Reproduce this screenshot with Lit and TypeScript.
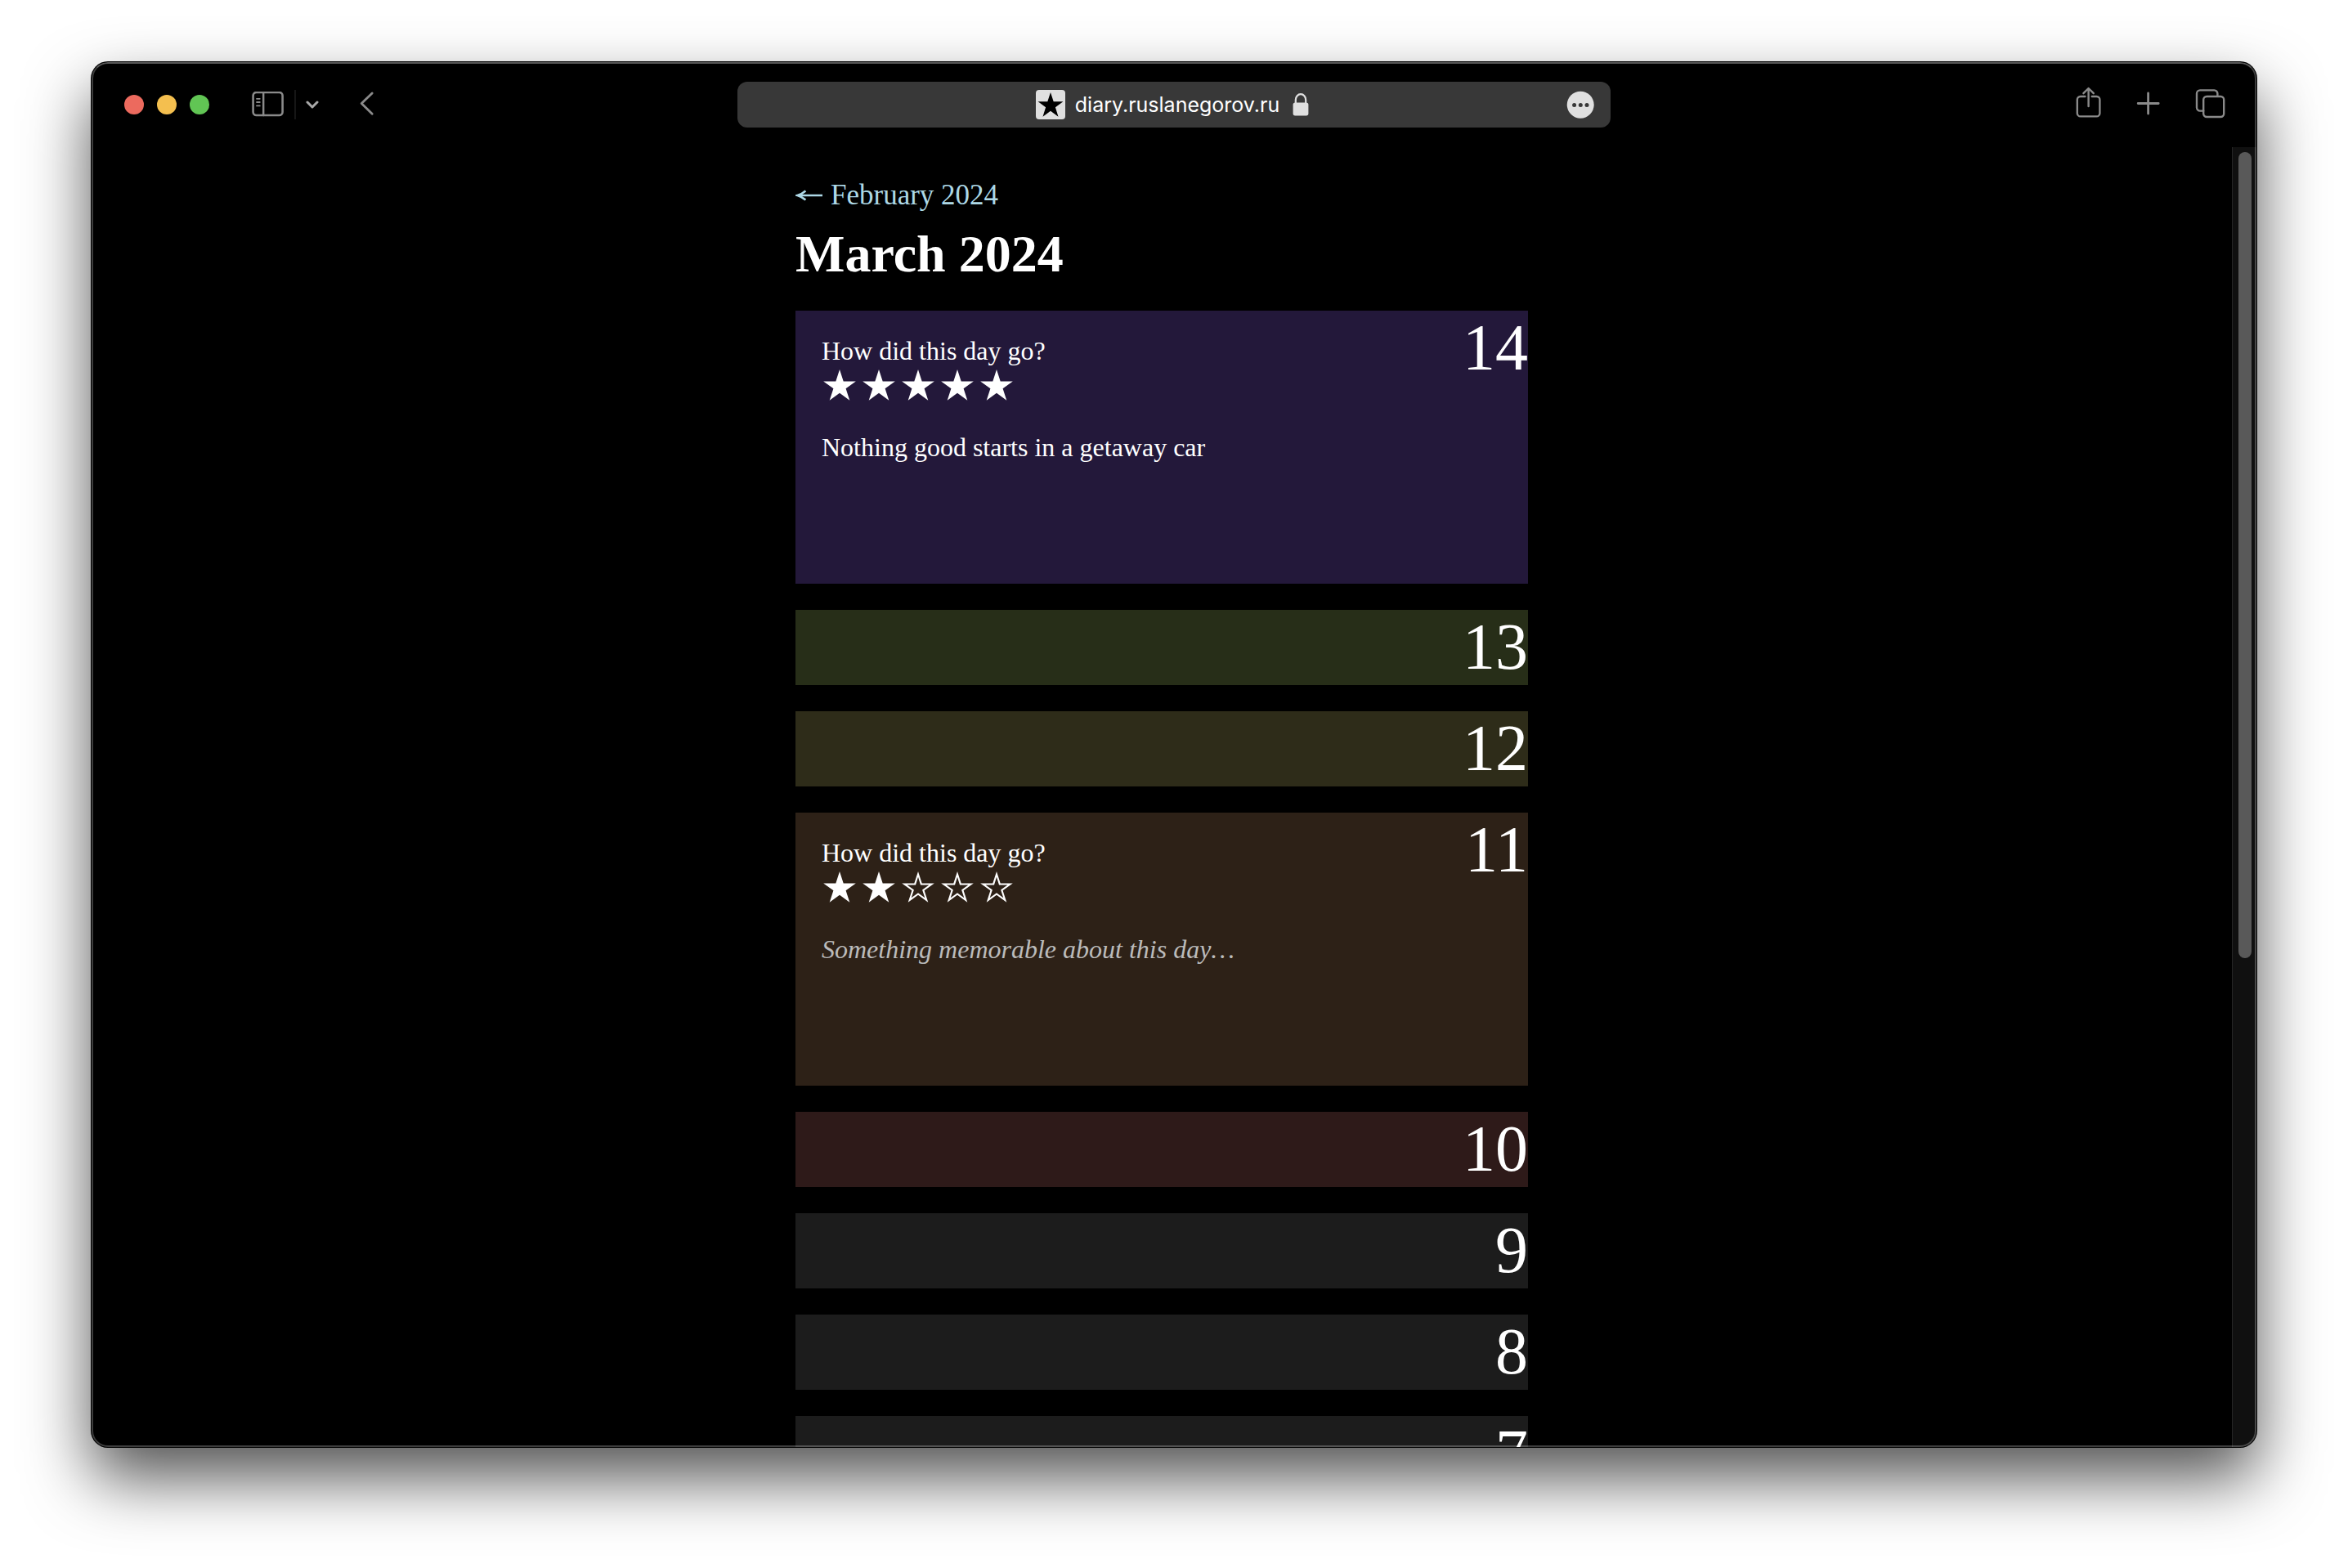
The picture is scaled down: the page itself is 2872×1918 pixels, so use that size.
import { LitElement, html, svg, css } from "lit";
import { customElement, property, state } from "lit/decorators.js";
import { classMap } from "lit/directives/class-map.js";

interface Day {
  num: number;
  tone: string;
  open?: boolean;
  rating?: number;
  note?: string;
}

const STAR = "24,3 28.7,17.4 43.8,17.4 31.6,26.3 36.3,40.7 24,31.8 11.7,40.7 16.4,26.3 4.2,17.4 19.3,17.4";
const STAR_INNER = "24,9.8 27,19.4 37.4,19.4 29.1,25.5 32.3,35.3 24,29.2 15.7,35.3 18.9,25.5 10.6,19.4 21,19.4";

@customElement("day-card")
export class DayCard extends LitElement {
  @property({ attribute: false }) day!: Day;
  @state() private rating?: number;

  static styles = css`
    :host {
      display: block;
    }
    .card {
      display: grid;
      grid-template-columns: minmax(0, 1fr) auto;
      align-items: start;
      color: #fff;
    }
    .violet { background: #23183a; }
    .green { background: #272e18; }
    .olive { background: #2e2c19; }
    .brown { background: #2d2117; }
    .red { background: #2e1a19; }
    .gray { background: #1c1c1c; }
    .body {
      display: flex;
      flex-direction: column;
      padding: 31px 0 32px 32px;
      font-size: 32px;
      line-height: 37px;
    }
    .stars {
      display: flex;
      height: 48px;
      margin-bottom: 33px;
    }
    .star {
      width: 48px;
      height: 48px;
      padding: 0;
      border: 0;
      background: none;
      color: inherit;
      cursor: pointer;
    }
    .star svg {
      display: block;
      width: 100%;
      height: 100%;
    }
    .note {
      display: block;
      box-sizing: border-box;
      width: 100%;
      height: 153px;
      padding: 0;
      border: 0;
      outline: 0;
      resize: none;
      background: none;
      color: inherit;
      font: inherit;
    }
    .note::placeholder {
      color: #bbb;
      font-style: italic;
      opacity: 1;
    }
    .num {
      grid-column: 2;
      padding-bottom: 2px;
      font-size: 80px;
      line-height: 90px;
    }
  `;

  render() {
    const d = this.day;
    const rating = this.rating ?? d.rating ?? 0;
    return html`
      <article class=${classMap({ card: true, [d.tone]: true })}>
        ${d.open
          ? html`<div class="body">
              <label for="note">How did this day go?</label>
              <div class="stars">
                ${[1, 2, 3, 4, 5].map(
                  (n) => html`<button
                    class="star"
                    type="button"
                    aria-label=${n}
                    aria-pressed=${n <= rating}
                    @click=${() => (this.rating = n)}
                  >
                    <svg viewBox="2 -1 48 48" fill="currentColor" fill-rule="evenodd">
                      ${n <= rating
                        ? svg`<polygon points=${STAR} />`
                        : svg`<path d=${`M${STAR}Z M${STAR_INNER}Z`} />`}
                    </svg>
                  </button>`
                )}
              </div>
              <textarea
                class="note"
                id="note"
                placeholder="Something memorable about this day…"
                .value=${d.note ?? ""}
              ></textarea>
            </div>`
          : null}
        <span class="num">${d.num}</span>
      </article>
    `;
  }
}

@customElement("browser-toolbar")
export class BrowserToolbar extends LitElement {
  static styles = css`
    :host {
      display: block;
    }
    .bar {
      display: grid;
      grid-template-columns: minmax(max-content, 1fr) minmax(0, 1068px) minmax(max-content, 1fr);
      align-items: center;
      height: 104px;
      color: #8a8a8a;
    }
    .side {
      display: flex;
      align-items: center;
    }
    .start {
      padding-left: 40px;
    }
    .end {
      justify-content: flex-end;
      gap: 36px;
      padding-right: 34px;
    }
    button {
      display: block;
      padding: 0;
      border: 0;
      background: none;
      color: inherit;
      cursor: pointer;
    }
    svg {
      display: block;
      fill: none;
      stroke: currentColor;
      stroke-linecap: round;
      stroke-linejoin: round;
    }
    .lights {
      display: flex;
      gap: 16px;
      margin-right: 52px;
    }
    .light {
      width: 24px;
      height: 24px;
      border-radius: 50%;
    }
    .close { background: #ec6a5e; }
    .min { background: #f4bf4f; }
    .max { background: #61c554; }
    .rule {
      width: 2px;
      height: 36px;
      margin: 0 12px;
      background: #161616;
    }
    .chevron {
      color: #a8a8a8;
      margin-right: 48px;
    }
    .address {
      display: grid;
      grid-template-columns: 1fr auto 1fr;
      align-items: center;
      height: 56px;
      padding: 0 20px;
      border-radius: 12px;
      background: #383838;
      color: #fff;
    }
    .site {
      grid-column: 2;
      display: flex;
      align-items: center;
      padding-right: 4px;
      font: 25px/36px Inter, "Liberation Sans", sans-serif;
    }
    .favicon {
      margin-right: 12px;
    }
    .lock {
      margin-left: 16px;
    }
    .more {
      justify-self: end;
    }
  `;

  render() {
    return html`
      <header class="bar">
        <div class="side start">
          <div class="lights">
            <button class="light close" aria-label="Close"></button>
            <button class="light min" aria-label="Minimize"></button>
            <button class="light max" aria-label="Zoom"></button>
          </div>
          <button aria-label="Sidebar">
            <svg width="40" height="32" viewBox="0 1 40 32">
              <rect x="1.6" y="2" width="36" height="28" rx="4" stroke-width="2.6" />
              <path d="M14.2 2v28" stroke-width="2.4" />
              <path d="M6 9.8h3.8M6 14h3.8M6 18.4h3.8" stroke-width="1.8" />
            </svg>
          </button>
          <span class="rule"></span>
          <button class="chevron" aria-label="Tab groups">
            <svg width="18" height="16" viewBox="1 0 18 16">
              <path d="M3 5l6 6 6-6" stroke-width="3" />
            </svg>
          </button>
          <button aria-label="Back">
            <svg width="20" height="32" viewBox="1 1 20 32">
              <path d="M16.2 3L3.2 15.6L16.2 28.2" stroke-width="2.8" />
            </svg>
          </button>
        </div>
        <div class="address">
          <div class="site">
            <svg class="favicon" width="36" height="36" viewBox="0 0 36 36">
              <rect width="36" height="36" rx="4" fill="#e0e0e0" stroke="none" />
              <polygon fill="#000" stroke="none"
                points="18,3 21.7,14.2 33.4,14.2 23.9,21.2 27.5,32.8 18,25.7 8.5,32.8 12.1,21.2 2.6,14.2 14.3,14.2" />
            </svg>
            <span>diary.ruslanegorov.ru</span>
            <svg class="lock" width="20" height="30" viewBox="0 0 20 30">
              <rect x="0.6" y="12.4" width="18.8" height="16" rx="2.6" fill="#e0e0e0" stroke="none" />
              <path d="M3.8 13.4V9.2a6.2 7 0 0 1 12.4 0V13.4" stroke="#e0e0e0" stroke-width="2.2" />
            </svg>
          </div>
          <button class="more" aria-label="Page menu">
            <svg width="34" height="34" viewBox="0 0 34 34" stroke="none">
              <circle cx="17.2" cy="17.2" r="16.5" fill="#e0e0e0" stroke="none" />
              <g fill="#383838" stroke="none">
                <circle cx="9.6" cy="17.4" r="2.5" />
                <circle cx="17.3" cy="17.4" r="2.5" />
                <circle cx="25" cy="17.4" r="2.5" />
              </g>
            </svg>
          </button>
        </div>
        <div class="side end">
          <button aria-label="Share">
            <svg width="40" height="44" viewBox="-1 5 40 44" stroke-width="2.4">
              <path d="M15.4 17H9.8a4 4 0 0 0-4 4V37.4a4 4 0 0 0 4 4h19.6a4 4 0 0 0 4-4V21a4 4 0 0 0-4-4h-5.6" />
              <path d="M19.6 29V7.4M13.4 13.2L19.6 7l6.2 6.2" />
            </svg>
          </button>
          <button aria-label="New tab">
            <svg width="36" height="36" viewBox="0 0 36 36" stroke-width="2.8">
              <path d="M17.6 4v25M5.2 16.5h25" />
            </svg>
          </button>
          <button aria-label="Tabs">
            <svg width="44" height="40" viewBox="2 1 44 40" stroke-width="2.4">
              <path d="M15.2 28.6H11a4 4 0 0 1-4-4V7.4a4 4 0 0 1 4-4h17.4a4 4 0 0 1 4 4v3" />
              <rect x="15.2" y="11" width="25" height="25" rx="4" />
            </svg>
          </button>
        </div>
      </header>
    `;
  }
}

@customElement("app-root")
export class AppRoot extends LitElement {
  @state() private days: Day[] = [
    { num: 14, tone: "violet", open: true, rating: 5, note: "Nothing good starts in a getaway car" },
    { num: 13, tone: "green" },
    { num: 12, tone: "olive" },
    { num: 11, tone: "brown", open: true, rating: 2 },
    { num: 10, tone: "red" },
    { num: 9, tone: "gray" },
    { num: 8, tone: "gray" },
    { num: 7, tone: "gray" },
  ];

  static styles = css`
    :host {
      display: block;
      box-sizing: border-box;
      height: 100vh;
      padding: 76px 112px 148px;
      background: #fff;
      overflow: hidden;
      font-family: "Liberation Serif", "Times New Roman", serif;
    }
    .window {
      position: relative;
      display: flex;
      flex-direction: column;
      height: 100%;
      border-radius: 20px;
      overflow: hidden;
      background: #000;
      box-shadow: 0 0 0 1px #000, 0 38px 80px rgba(0, 0, 0, 0.68);
    }
    .window::after {
      content: "";
      position: absolute;
      inset: 0;
      border: 2px solid rgba(255, 255, 255, 0.24);
      border-top-color: rgba(255, 255, 255, 0.34);
      border-radius: inherit;
      pointer-events: none;
    }
    .view {
      flex: 1;
      display: flex;
      min-height: 0;
    }
    .page {
      flex: 1;
      display: flex;
      justify-content: center;
      overflow: hidden;
    }
    .column {
      flex: 0 1 896px;
      min-width: 0;
      padding-top: 39px;
    }
    .prev {
      display: flex;
      align-items: center;
      gap: 10px;
      width: max-content;
      color: #add8e6;
      font-size: 35px;
      line-height: 40px;
      text-decoration: none;
    }
    .title {
      margin: 15px 0 32px;
      color: #fff;
      font-size: 64px;
      line-height: 74px;
    }
    .days {
      display: flex;
      flex-direction: column;
      gap: 32px;
    }
    .track {
      box-sizing: border-box;
      width: 30px;
      padding: 6px 6px 0 7px;
      border-left: 1px solid #262626;
      background: #101010;
    }
    .thumb {
      width: 16px;
      height: calc(63% - 12px);
      border-radius: 8px;
      background: #595959;
    }
  `;

  render() {
    return html`
      <div class="window">
        <browser-toolbar></browser-toolbar>
        <div class="view">
          <main class="page">
            <div class="column">
              <a class="prev" href="#">
                <svg width="33" height="16" viewBox="0 0 33 16" fill="none" stroke="currentColor">
                  <path d="M5 8H33" stroke-width="2.6" />
                  <path d="M12.4 2.4C9.6 4.8 6.4 6.8 2.4 8C6.4 9.2 9.6 11.2 12.4 13.6" stroke-width="2.6" />
                </svg>
                February 2024
              </a>
              <h1 class="title">March 2024</h1>
              <div class="days">
                ${this.days.map((d) => html`<day-card .day=${d}></day-card>`)}
              </div>
            </div>
          </main>
          <div class="track"><div class="thumb"></div></div>
        </div>
      </div>
    `;
  }
}
